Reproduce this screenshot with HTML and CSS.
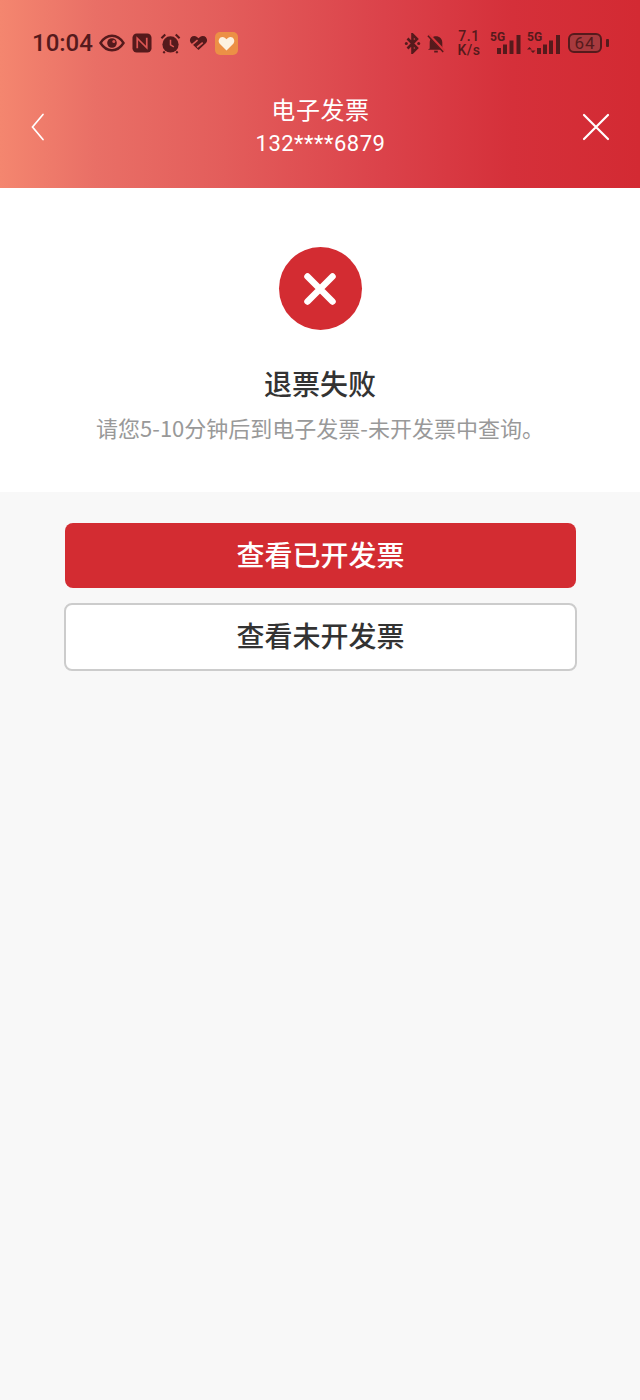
FILE: index.html
```html
<!DOCTYPE html>
<html lang="zh-CN">
<head>
    <meta charset="UTF-8">
    <meta name="viewport" content="width=device-width, initial-scale=1.0">
    <title>电子发票</title>
    <link rel="stylesheet" href="styles.css">
</head>
<body>
    <header class="top">
        <!-- Status bar -->
        <div class="status">
            <div class="status-left">
                <span class="time">10:04</span>
                <svg class="ic-eye" width="26" height="18" viewBox="0 0 26 18"><path d="M1.5 9C5 3.5 9 1.8 13 1.8S21 3.5 24.5 9C21 14.5 17 16.2 13 16.200S5 14.500 1.500 9Z" fill="none" stroke="#551a1c" stroke-width="2.400"/><circle cx="13" cy="9" r="4.800" fill="#551a1c"/><circle cx="14.800" cy="7.400" r="1.500" fill="#d9534f"/></svg>
                <svg width="20" height="20" viewBox="0 0 21 21"><rect x="0.500" y="0.500" width="20" height="20" rx="4.500" fill="#551a1c"/><path d="M5.500 16V5.500L15.500 15.500V5" fill="none" stroke="#dd5654" stroke-width="1.800"/></svg>
                <svg class="ic-alarm" width="21" height="21" viewBox="0 0 22 22"><circle cx="11" cy="12" r="8.500" fill="#551a1c"/><path d="M11 7V12.500L14.500 14.500" fill="none" stroke="#dd5654" stroke-width="1.600"/><path d="M1.500 5.500L5.500 1.500M20.500 5.500L16.500 1.500M5 19.500L3.500 21M17 19.500L18.500 21" stroke="#551a1c" stroke-width="2.200"/></svg>
                <svg width="19" height="16" viewBox="0 0 20 17"><path d="M10 16L2 8.500C-0.500 5.500 1.500 1 5.500 1C7.500 1 8.800 2 10 3.500C11.200 2 12.500 1 14.500 1C18.500 1 20.500 5.500 18 8.500Z" fill="#551a1c"/><path d="M3 10.500L9 5.500M8.500 13L14.500 8" stroke="#df5a57" stroke-width="1.800"/></svg>
                <svg width="23" height="23" viewBox="0 0 23 23"><rect width="23" height="23" rx="5" fill="#ec9046"/><path d="M11.500 18.500L4.500 11.500C2.500 8.500 4.500 5 7.500 5C9.200 5 10.500 6 11.500 7.300C12.500 6 13.800 5 15.500 5C18.500 5 20.500 8.500 18.500 11.500Z" fill="#fdf1e0"/></svg>
            </div>
            <div class="status-right">
                <svg width="17" height="21" viewBox="0 0 16 21"><path d="M3 5.500L12.500 15 8 19.500V1.500L12.500 6 3 15.500" fill="none" stroke="#551a1c" stroke-width="2.600"/><circle cx="1.800" cy="10.500" r="1.500" fill="#551a1c"/><circle cx="14.200" cy="10.500" r="1.500" fill="#551a1c"/></svg>
                <svg width="18" height="21" viewBox="0 0 20 21"><path d="M3 16V9.500C3 5.500 6 2.500 10 2.500S17 5.500 17 9.500V16L19 17.500H1Z" fill="#551a1c"/><path d="M8 18.500H12V20.500H8Z" fill="#551a1c"/><path d="M2 1L19 19" stroke="#d6333a" stroke-width="3.500"/><path d="M1 2L18 20" stroke="#551a1c" stroke-width="1.600"/></svg>
                <div class="speed"><span>7.1</span><span>K/s</span></div>
                <div class="signal">
                    <span class="net">5G</span>
                    <svg width="31" height="20" viewBox="0 0 31 20"><path d="M7 14h4v6H7zM13 10.500h4V20h-4zM19.500 6.500h4V20h-4zM26.500 1h4v19h-4z" fill="#551a1c"/></svg>
                </div>
                <div class="signal signal-wide">
                    <span class="net">5G</span>
                    <svg width="33" height="20" viewBox="0 0 33 20"><path d="M0 15.500l2.500-2.500 2.500 2.500zM3.500 16.500l2.500 2.500 2.500-2.500zM10 14h4v6h-4zM16 10.500h4V20h-4zM22 6.500h4V20h-4zM29 1h4v19h-4z" fill="#551a1c"/></svg>
                </div>
                <div class="battery">
                    <div class="battery-body">64</div>
                    <div class="battery-cap"></div>
                </div>
            </div>
        </div>

        <!-- Navigation bar -->
        <div class="nav">
            <svg class="nav-back" width="16" height="28" viewBox="0 0 16 28"><path d="M13 1.500L2.500 14 13 26.500" fill="none" stroke="#fff" stroke-width="1.700" stroke-linecap="round"/></svg>
            <div class="nav-title">
                <div class="nav-name">电子发票</div>
                <div class="nav-phone">132****6879</div>
            </div>
            <svg class="nav-close" width="30" height="30" viewBox="0 0 30 30"><path d="M3 3L27 27M27 3L3 27" fill="none" stroke="#fff" stroke-width="2.200" stroke-linecap="round"/></svg>
        </div>
    </header>

    <section class="result">
        <div class="result-icon">
            <svg width="34" height="34" viewBox="0 0 34 34"><path d="M4.500 4.500L29.500 29.500M29.500 4.500L4.500 29.500" stroke="#fff" stroke-width="6.500" stroke-linecap="round"/></svg>
        </div>
        <h1 class="result-title">退票失败</h1>
        <p class="result-desc">请您5-10分钟后到电子发票-未开发票中查询。</p>
    </section>

    <div class="actions">
        <button class="btn btn-primary">查看已开发票</button>
        <button class="btn btn-outline">查看未开发票</button>
    </div>
</body>
</html>
```

FILE: styles.css
```css
* {
    box-sizing: border-box;
}

body {
    font-family: "Noto Sans CJK SC", "Noto Sans", sans-serif;
    margin: 0;
    padding: 0;
    width: 640px;
    height: 1400px;
    background-color: #f8f8f8;
    overflow: hidden;
}

.top {
    height: 188px;
    padding: 20px 0 0;
    background: linear-gradient(90deg, #f4866f 0%, #e96f66 15%, #e35d5b 35%, #db424a 60%, #d5303a 80%, #d32a33 100%);
}

.status {
    height: 46px;
    padding: 0 31px 0 32px;
    display: flex;
    justify-content: space-between;
    align-items: center;
    color: #551a1c;
}

.status-left,
.status-right {
    display: flex;
    align-items: center;
}

.status-left {
    gap: 7px;
}

.status-right {
    gap: 6px;
}

.ic-eye {
    margin-left: -1px;
}

.ic-alarm {
    margin: 0 1px;
}

.time {
    font-family: Roboto, sans-serif;
    font-size: 24px;
    font-weight: 500;
}

.speed {
    display: flex;
    flex-direction: column;
    align-items: center;
    width: 24px;
    margin: 0 3px 0 6px;
    font-family: Roboto, sans-serif;
    font-size: 14px;
    font-weight: 500;
    line-height: 14px;
    letter-spacing: 0.5px;
}

.signal {
    position: relative;
    width: 31px;
    height: 20px;
    margin-top: 2px;
}

.signal-wide {
    width: 33px;
}

.signal svg {
    display: block;
}

.net {
    position: absolute;
    top: -3px;
    left: 0;
    font-family: Roboto, sans-serif;
    font-size: 12px;
    font-weight: 700;
    line-height: 12px;
}

.battery {
    display: flex;
    align-items: center;
    gap: 4px;
    margin-left: 2px;
}

.battery-body {
    width: 34px;
    height: 20px;
    border: 2px solid #551a1c;
    border-radius: 6px;
    background-color: #a83a3e;
    font-family: Roboto, sans-serif;
    font-size: 17px;
    line-height: 16px;
    letter-spacing: 1px;
    text-align: center;
}

.battery-cap {
    width: 3px;
    height: 8px;
    background-color: #551a1c;
    border-radius: 1px;
}

.nav {
    height: 80px;
    padding: 0 29px 0 30px;
    margin-top: 21px;
    display: grid;
    grid-template-columns: 60px 1fr 60px;
    align-items: center;
    color: #fff;
}

.nav-back {
    display: block;
}

.nav-close {
    display: block;
    justify-self: end;
}

.nav-title {
    padding-bottom: 2px;
    text-align: center;
}

.nav-name {
    font-size: 24px;
    line-height: 34px;
    letter-spacing: 0.6px;
}

.nav-phone {
    margin-top: 2px;
    font-family: Roboto, sans-serif;
    font-size: 22px;
    line-height: 32px;
    letter-spacing: 0.5px;
}

.result {
    height: 304px;
    padding-top: 59px;
    background-color: #fff;
    display: flex;
    flex-direction: column;
    align-items: center;
}

.result-icon {
    width: 83px;
    height: 83px;
    border-radius: 50%;
    background-color: #d32c32;
    display: flex;
    justify-content: center;
    align-items: center;
}

.result-title {
    margin: 33px 0 0;
    font-size: 28px;
    font-weight: 500;
    line-height: 40px;
    color: #333;
}

.result-desc {
    margin: 8px 0 0;
    font-size: 22px;
    line-height: 32px;
    color: #999;
}

.actions {
    padding: 31px 63px 0 64px;
    display: flex;
    flex-direction: column;
    align-items: center;
}

.btn {
    display: block;
    font-family: inherit;
    font-size: 28px;
    font-weight: 500;
    border-radius: 8px;
    padding: 0 0 4px;
}

.btn-primary {
    width: 511px;
    height: 65px;
    color: #fff;
    background-color: #d32c32;
    border: none;
}

.btn-outline {
    width: 513px;
    height: 68px;
    margin-top: 15px;
    color: #333;
    background-color: #fff;
    border: 2px solid #ccc;
}
```
